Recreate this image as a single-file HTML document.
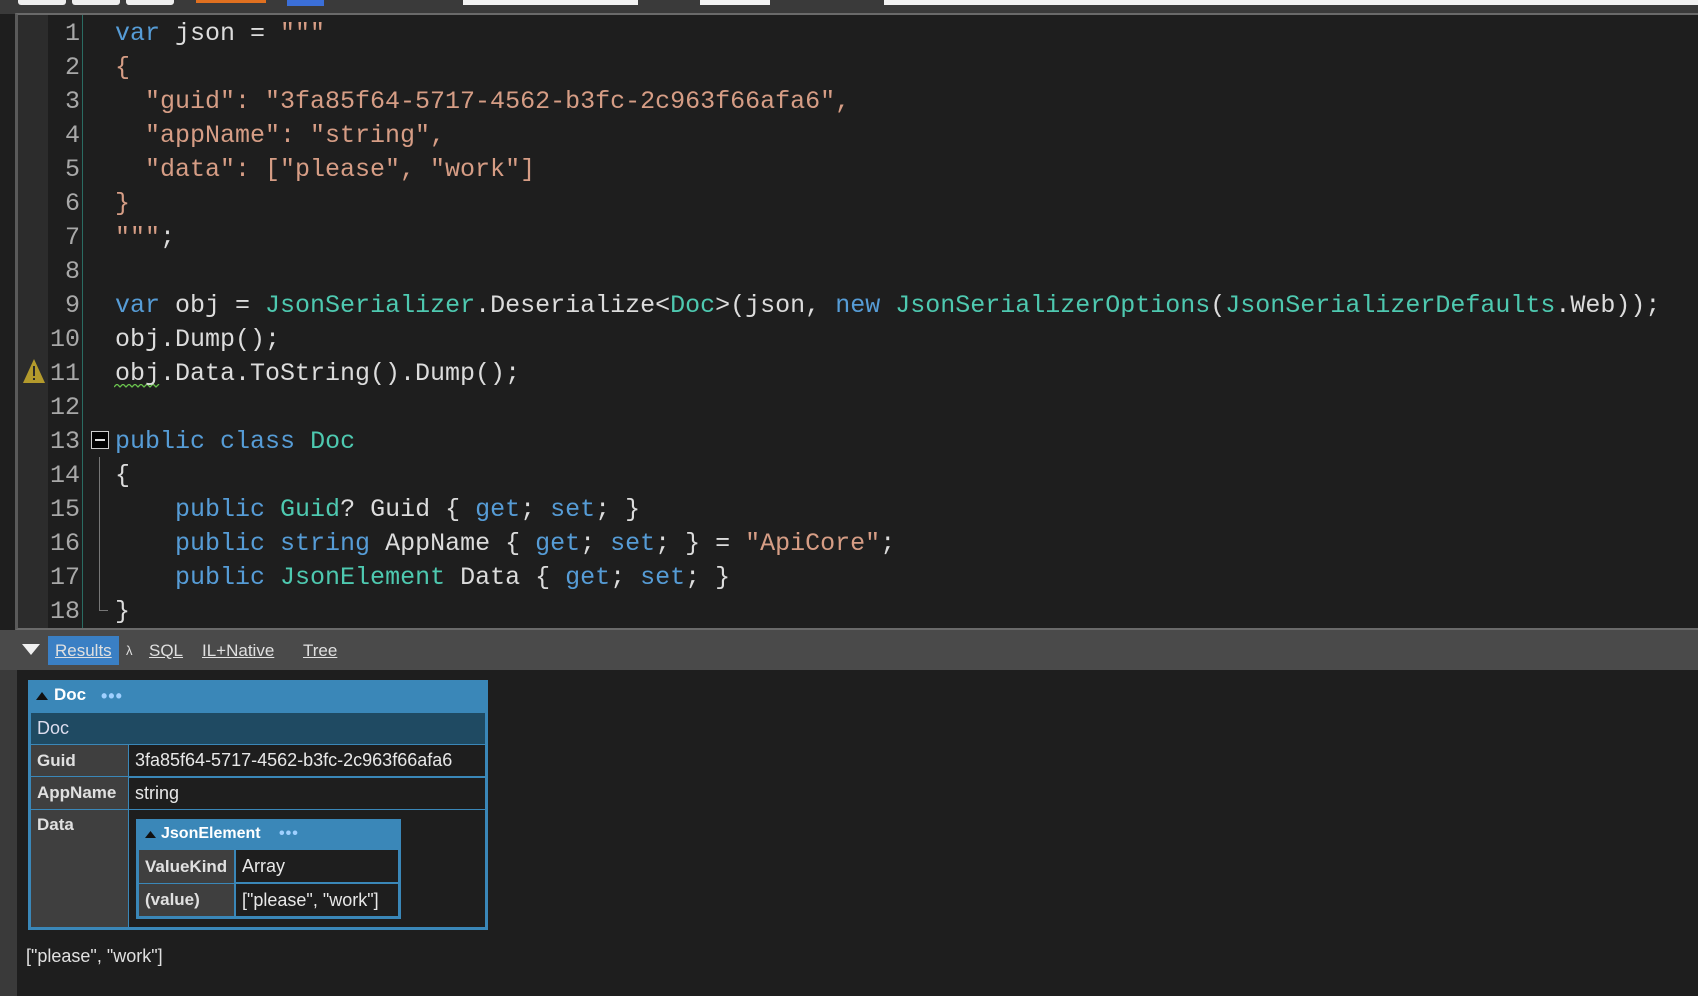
<!DOCTYPE html>
<html><head><meta charset="utf-8"><style>
*{margin:0;padding:0;box-sizing:border-box}
body{width:1698px;height:996px;background:#1e1e1e;position:relative;overflow:hidden;font-family:"Liberation Sans",sans-serif}
.abs{position:absolute}
.mono{position:absolute;left:0;top:3px;font-family:"Liberation Mono",monospace;font-size:25px;white-space:pre;color:#dcdcdc}
.ln{position:absolute;left:44px;width:36px;text-align:right;color:#a8a8a8;font-family:"Liberation Mono",monospace;font-size:25px}
.code{position:absolute;left:115px}
.k{color:#569cd6}.t{color:#4ec9b0}.s{color:#d69d85}
.tab{position:absolute;top:636px;height:29px;line-height:29px;font-size:17px;color:#e0e0e0;text-decoration:underline}
.lab{position:absolute;background:#3f3f3f;color:#e0e0e0;font-weight:bold;font-size:17px;padding-left:6px}
.val{position:absolute;background:#1e1e1e;color:#e8e8e8;font-size:18px;padding-left:6px}
</style></head><body>
<div class="abs" style="left:0;top:0;width:1698px;height:14px;background:#3a3a3a"></div>
<div class="abs" style="left:18px;top:0;width:48px;height:5px;background:#eee;border-radius:0 0 3px 3px"></div>
<div class="abs" style="left:72px;top:0;width:48px;height:5px;background:#eee;border-radius:0 0 3px 3px"></div>
<div class="abs" style="left:126px;top:0;width:48px;height:5px;background:#eee;border-radius:0 0 3px 3px"></div>
<div class="abs" style="left:196px;top:0;width:70px;height:3px;background:#e07020"></div>
<div class="abs" style="left:287px;top:0;width:37px;height:6px;background:#3b6fd8"></div>
<div class="abs" style="left:463px;top:0;width:175px;height:5px;background:#f2f2f2"></div>
<div class="abs" style="left:700px;top:0;width:70px;height:5px;background:#f2f2f2"></div>
<div class="abs" style="left:884px;top:0;width:814px;height:5px;background:#f2f2f2"></div>
<div class="abs" style="left:0;top:14px;width:15px;height:616px;background:#1e1e1e"></div>
<div class="abs" style="left:15px;top:13px;width:1683px;height:617px;border-left:3px solid #5a5a5a;border-top:2px solid #6a6a6a;border-bottom:2px solid #6a6a6a;background:#1e1e1e"></div>
<div class="abs" style="left:18px;top:15px;width:30px;height:613px;background:#2c2c2c"></div>
<div class="abs" style="left:82px;top:15px;width:1px;height:613px;background:#2a6b62"></div>
<svg class="abs" style="left:22px;top:358px" width="24" height="26"><polygon points="12,1 23,25 1,25" fill="#b39a2c"/><rect x="11" y="8" width="2" height="10" fill="#2a2a2a"/><rect x="11" y="20" width="2" height="2" fill="#2a2a2a"/></svg>
<div class="abs" style="left:91px;top:431px;width:18px;height:18px;border:1px solid #ccc;background:#000"><div style="position:absolute;left:3px;top:7px;width:10px;height:2px;background:#ddd"></div></div>
<div class="abs" style="left:99px;top:457px;width:1px;height:154px;background:#777"></div>
<div class="abs" style="left:99px;top:610px;width:9px;height:1px;background:#777"></div>
<svg class="abs" style="left:114px;top:384px" width="46" height="6"><path d="M0,3 L3,0 L6,3 L9,0 L12,3 L15,0 L18,3 L21,0 L24,3 L27,0 L30,3 L33,0 L36,3 L39,0 L42,3 L45,0" stroke="#6ac24e" stroke-width="1.3" fill="none"/></svg>
<div class="mono">
<div class="ln" style="top:16px">1</div><div class="code" style="top:16px"><span class="k">var</span> json = <span class="s">"""</span></div>
<div class="ln" style="top:50px">2</div><div class="code s" style="top:50px">{</div>
<div class="ln" style="top:84px">3</div><div class="code s" style="top:84px">  "guid": "3fa85f64-5717-4562-b3fc-2c963f66afa6",</div>
<div class="ln" style="top:118px">4</div><div class="code s" style="top:118px">  "appName": "string",</div>
<div class="ln" style="top:152px">5</div><div class="code s" style="top:152px">  "data": ["please", "work"]</div>
<div class="ln" style="top:186px">6</div><div class="code s" style="top:186px">}</div>
<div class="ln" style="top:220px">7</div><div class="code" style="top:220px"><span class="s">"""</span>;</div>
<div class="ln" style="top:254px">8</div>
<div class="ln" style="top:288px">9</div><div class="code" style="top:288px"><span class="k">var</span> obj = <span class="t">JsonSerializer</span>.Deserialize&lt;<span class="t">Doc</span>&gt;(json, <span class="k">new</span> <span class="t">JsonSerializerOptions</span>(<span class="t">JsonSerializerDefaults</span>.Web));</div>
<div class="ln" style="top:322px">10</div><div class="code" style="top:322px">obj.Dump();</div>
<div class="ln" style="top:356px">11</div><div class="code" style="top:356px">obj.Data.ToString().Dump();</div>
<div class="ln" style="top:390px">12</div>
<div class="ln" style="top:424px">13</div><div class="code" style="top:424px"><span class="k">public</span> <span class="k">class</span> <span class="t">Doc</span></div>
<div class="ln" style="top:458px">14</div><div class="code" style="top:458px">{</div>
<div class="ln" style="top:492px">15</div><div class="code" style="top:492px">    <span class="k">public</span> <span class="t">Guid</span>? Guid { <span class="k">get</span>; <span class="k">set</span>; }</div>
<div class="ln" style="top:526px">16</div><div class="code" style="top:526px">    <span class="k">public</span> <span class="k">string</span> AppName { <span class="k">get</span>; <span class="k">set</span>; } = <span class="s">"ApiCore"</span>;</div>
<div class="ln" style="top:560px">17</div><div class="code" style="top:560px">    <span class="k">public</span> <span class="t">JsonElement</span> Data { <span class="k">get</span>; <span class="k">set</span>; }</div>
<div class="ln" style="top:594px">18</div><div class="code" style="top:594px">}</div>
</div>
<div class="abs" style="left:0;top:630px;width:1698px;height:40px;background:#4a4a4a"></div>
<div class="abs" style="left:0;top:670px;width:17px;height:326px;background:#3a3a3a"></div>
<svg class="abs" style="left:22px;top:644px" width="18" height="12"><polygon points="0,0 18,0 9,11" fill="#f0f0f0"/></svg>
<div class="abs" style="left:48px;top:636px;width:71px;height:29px;background:#3a7fc4"></div>
<div class="tab" style="left:55px">Results</div>
<div class="tab" style="left:126px;text-decoration:none;font-size:13px">λ</div>
<div class="tab" style="left:149px">SQL</div>
<div class="tab" style="left:202px">IL+Native</div>
<div class="tab" style="left:303px">Tree</div>
<div class="abs" style="left:28px;top:680px;width:460px;height:250px;background:#3a87b8"></div>
<svg class="abs" style="left:36px;top:692px" width="12" height="8"><polygon points="0,8 12,8 6,0" fill="#111"/></svg>
<div class="abs" style="left:54px;top:685px;font-size:17px;font-weight:bold;color:#fff">Doc</div>
<div class="abs" style="left:101px;top:686px;font-size:18px;font-weight:bold;color:#9fd0ff;letter-spacing:1px">•••</div>
<div class="abs" style="left:31px;top:713px;width:454px;height:31px;background:#1f4a62;color:#dde;font-size:18px;padding-left:6px;line-height:31px">Doc</div>
<div class="lab" style="left:31px;top:745px;width:97px;height:31px;line-height:31px">Guid</div>
<div class="val" style="left:129px;top:745px;width:356px;height:31px;line-height:31px">3fa85f64-5717-4562-b3fc-2c963f66afa6</div>
<div class="lab" style="left:31px;top:777px;width:97px;height:32px;line-height:32px">AppName</div>
<div class="val" style="left:129px;top:778px;width:356px;height:31px;line-height:31px">string</div>
<div class="lab" style="left:31px;top:810px;width:97px;height:117px;padding-top:5px">Data</div>
<div class="val" style="left:129px;top:810px;width:356px;height:117px"></div>
<div class="abs" style="left:136px;top:819px;width:265px;height:100px;background:#3a87b8"></div>
<svg class="abs" style="left:145px;top:831px" width="11" height="7"><polygon points="0,7 11,7 5.5,0" fill="#111"/></svg>
<div class="abs" style="left:161px;top:825px;font-size:16px;font-weight:bold;color:#fff">JsonElement</div>
<div class="abs" style="left:279px;top:825px;font-size:16px;font-weight:bold;color:#9fd0ff;letter-spacing:1px">•••</div>
<div class="lab" style="left:139px;top:850px;width:95px;height:33px;line-height:33px">ValueKind</div>
<div class="val" style="left:236px;top:850px;width:162px;height:32px;line-height:32px">Array</div>
<div class="lab" style="left:139px;top:884px;width:95px;height:32px;line-height:32px;font-weight:bold">(value)</div>
<div class="val" style="left:236px;top:884px;width:162px;height:32px;line-height:32px">["please", "work"]</div>
<div class="abs" style="left:26px;top:946px;font-size:18px;color:#e0e0e0">["please", "work"]</div>
</body></html>
